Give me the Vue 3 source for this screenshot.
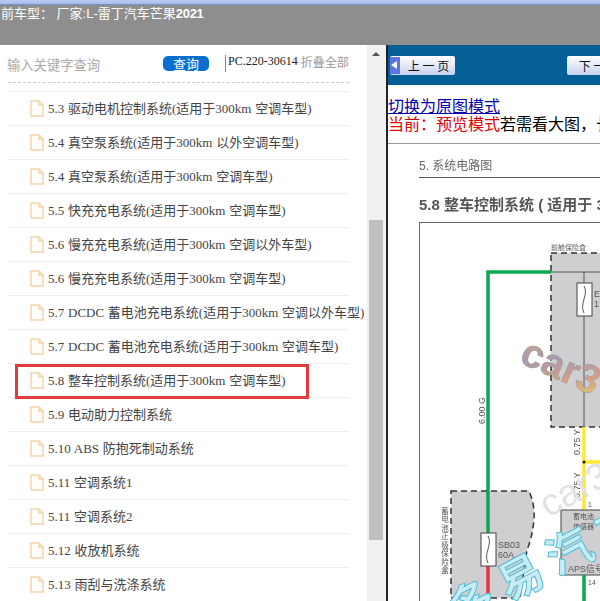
<script setup>
const chapters = [
  { id: 1, title: "5.3 驱动电机控制系统(适用于300km 空调车型)" },
  { id: 2, title: "5.4 真空泵系统(适用于300km 以外空调车型)" },
  { id: 3, title: "5.4 真空泵系统(适用于300km 空调车型)" },
  { id: 4, title: "5.5 快充充电系统(适用于300km 空调车型)" },
  { id: 5, title: "5.6 慢充充电系统(适用于300km 空调以外车型)" },
  { id: 6, title: "5.6 慢充充电系统(适用于300km 空调车型)" },
  { id: 7, title: "5.7 DCDC 蓄电池充电系统(适用于300km 空调以外车型)" },
  { id: 8, title: "5.7 DCDC 蓄电池充电系统(适用于300km 空调车型)" },
  { id: 9, title: "5.8 整车控制系统(适用于300km 空调车型)", marked: true },
  { id: 10, title: "5.9 电动助力控制系统" },
  { id: 11, title: "5.10 ABS 防抱死制动系统" },
  { id: 12, title: "5.11 空调系统1" },
  { id: 13, title: "5.11 空调系统2" },
  { id: 14, title: "5.12 收放机系统" },
  { id: 15, title: "5.13 雨刮与洗涤系统" },
];
</script>

<template>
  <div class="page">
    <div class="top-strip"></div>
    <header class="model-bar">前车型： 厂家:L-雷丁汽车芒果<b>2021</b></header>

    <main class="main">
      <section class="side">
        <div class="side__content">
          <div class="toolbar">
            <span class="toolbar__input">输入关键字查询</span>
            <button class="toolbar__btn">查询</button>
            <span class="toolbar__code">PC.220-30614</span>
            <span class="toolbar__fold">折叠全部</span>
          </div>
          <ul class="chapter-list">
            <li class="chapter-list__item" v-for="item in chapters" :key="item.id">
              <svg class="doc-icon" width="14" height="17" viewBox="0 0 14 17">
                <path d="M1 1h8l4 4v11H1z M9 1v4h4" fill="#fffdf9" stroke="#f2d2a9" stroke-width="1.4" />
              </svg>
              <span>{{ item.title }}</span>
              <span v-if="item.marked" class="chapter-list__mark"></span>
            </li>
          </ul>
        </div>
        <div class="scrollbar">
          <span class="scrollbar__arrow"></span>
          <span class="scrollbar__thumb"></span>
        </div>
      </section>

      <section class="viewer">
        <nav class="pager">
          <button class="pager__btn pager__btn--prev"><i class="pager__arrow"></i>上 一 页</button>
          <button class="pager__btn pager__btn--next">下 一 页</button>
        </nav>
        <div class="mode-lines">
          <a class="mode-lines__link" href="#">切换为原图模式</a>
          <div><span class="mode-lines__now">当前：预览模式</span>若需看大图，长按图片</div>
        </div>
        <div class="rule"></div>
        <svg class="diagram" width="212" height="456" viewBox="388 145 212 456">
          <defs>
            <linearGradient id="wm" x1="0" y1="0" x2="1" y2="1">
              <stop offset="0" stop-color="#e0b070" />
              <stop offset="0.4" stop-color="#a898b8" />
              <stop offset="0.7" stop-color="#d8a080" />
              <stop offset="1" stop-color="#dcd47a" />
            </linearGradient>
          </defs>

          <text x="419" y="170" class="t-sec">5. 系统电路图</text>
          <line x1="419" y1="177.5" x2="600" y2="177.5" stroke="#555" />
          <text x="419" y="210" class="t-head">5.8 整车控制系统 ( 适用于 300km</text>

          <rect x="419.5" y="222.5" width="200" height="400" fill="#fff" stroke="#666" />

          <text x="551" y="250" class="t-small">前舱保险盒</text>
          <rect x="551" y="253" width="70" height="174" fill="#cfcfd2" stroke="#333" stroke-width="1.5" stroke-dasharray="6 4" />
          <path d="M488 532V272H551" fill="none" stroke="#0aa850" stroke-width="3.5" />
          <path d="M551 272H600M584 272V427" fill="none" stroke="#555" />
          <rect x="577" y="283" width="15" height="33" fill="#fff" stroke="#444" />
          <path d="M584 286c5 8-5 18 0 27" fill="none" stroke="#555" />
          <text x="594" y="297" class="t-fuse">E</text>
          <text x="594" y="307" class="t-fuse">1</text>

          <text class="t-wire" transform="translate(485 424) rotate(-90)">6.00 G</text>
          <text class="t-wire" transform="translate(580 455) rotate(-90)">0.75 Y</text>
          <text class="t-wire" transform="translate(580 498) rotate(-90)">0.75 Y</text>

          <path d="M584 427V510M584 462H600" fill="none" stroke="#ffe92e" stroke-width="3.5" />
          <circle cx="584" cy="462" r="1.5" fill="#111" />
          <text x="588" y="507" class="t-small">1</text>

          <path d="M451 491H529Q535 505 534 518Q533 535 527 550L520 598H451Z" fill="#cfcfd2" stroke="#333" stroke-width="1.5" stroke-dasharray="6 4" />
          <path d="M488 491V533" stroke="#0aa850" stroke-width="3.5" />
          <path d="M488 566V601" stroke="#e8323c" stroke-width="3.5" />
          <rect x="481" y="533" width="15" height="33" fill="#fff" stroke="#444" />
          <path d="M488 536c5 8-5 18 0 27" fill="none" stroke="#555" />
          <text x="498" y="548" class="t-fuse">SB03</text>
          <text x="498" y="558" class="t-fuse">60A</text>
          <text x="444" y="507" class="t-vert">蓄电池正极保险盒</text>

          <rect x="561" y="510" width="70" height="65" fill="#cfcfd2" stroke="#444" />
          <text x="573" y="519" class="t-small">蓄电池</text>
          <text x="573" y="529" class="t-small">传感器</text>
          <text x="568" y="572" class="t-fuse">APS信号</text>
          <text x="588" y="585" class="t-small">14</text>
          <path d="M584 575V601" stroke="#0aa850" stroke-width="3.5" />

          <text class="wm-car" transform="translate(518 362) rotate(24)">car3</text>
          <text class="wm-gray" transform="translate(548 518) rotate(-28)">car3</text>
          <text class="wm-cn" transform="translate(460 628) rotate(-28)">多易汽车</text>
        </svg>
      </section>
    </main>
  </div>
</template>

<style scoped>
.page {
  width: 600px;
  height: 601px;
  overflow: hidden;
  display: flex;
  flex-direction: column;
  background: #fff;
}

.top-strip {
  height: 5px;
  background: linear-gradient(#b9cdf0, #a9bfe9 70%, #5a78c8);
}

.model-bar {
  height: 40px;
  padding: 1px 0 0 1px;
  box-sizing: border-box;
  background: #8e8e8e;
  color: #fff;
  font: 13px/16px "Liberation Sans", "Noto Sans CJK SC", sans-serif;
  white-space: pre;
}

.model-bar b {
  letter-spacing: -0.3px;
}

.main {
  flex: 1;
  display: flex;
  min-height: 0;
}

.side {
  width: 386px;
  display: flex;
  flex-shrink: 0;
  background: #fff;
}

.side__content {
  width: 367px;
  padding-left: 8px;
  box-sizing: border-box;
  overflow: hidden;
}

.toolbar {
  width: 341px;
  height: 38px;
  box-sizing: border-box;
  border-bottom: 1px dashed #ccc;
  display: flex;
  align-items: flex-start;
  white-space: nowrap;
}

.toolbar__input {
  width: 156px;
  margin-left: -1px;
  padding-top: 12px;
  color: #aaa;
  font: 13.3px/16px "Noto Sans CJK SC", sans-serif;
}

.toolbar__btn {
  width: 46px;
  height: 15px;
  margin-top: 11px;
  padding: 0;
  border: none;
  border-radius: 5px;
  background: #0a6fcf;
  color: #fff;
  font: 13px/15px "Noto Sans CJK SC", sans-serif;
}

.toolbar__code {
  margin: 10px 0 0 16px;
  padding-left: 2px;
  height: 17px;
  border-left: 1px solid #888;
  color: #222;
  font: 12px/13px "Liberation Serif", serif;
}

.toolbar__fold {
  margin: 10px 0 0 3px;
  color: #999;
  font: 12px/13px "Noto Sans CJK SC", sans-serif;
}

.chapter-list {
  list-style: none;
  margin: 8px 0 0;
  padding: 0;
  width: 341px;
  border-top: 1px solid #eee;
}

.chapter-list__item {
  position: relative;
  height: 34px;
  box-sizing: border-box;
  padding-left: 22px;
  border-bottom: 1px solid #eee;
  display: flex;
  align-items: center;
  gap: 4px;
  color: #444;
  font: 13px/16px "Liberation Serif", "Noto Sans CJK SC", serif;
  word-spacing: 0.5px;
  white-space: nowrap;
}

.doc-icon {
  flex-shrink: 0;
}

.chapter-list__mark {
  position: absolute;
  left: 7px;
  top: 0;
  width: 294px;
  height: 35px;
  box-sizing: border-box;
  border: 3px solid #e23b3b;
}

.scrollbar {
  position: relative;
  width: 19px;
  background: #f1f1f1;
}

.scrollbar__arrow {
  position: absolute;
  left: 5px;
  top: 7px;
  border: 4px solid transparent;
  border-top: none;
  border-bottom: 4px solid #555;
}

.scrollbar__thumb {
  position: absolute;
  left: 2px;
  top: 175px;
  width: 14px;
  height: 320px;
  background: #c0c0c0;
}

.viewer {
  flex: 1;
  min-width: 0;
  overflow: hidden;
  border-left: 2px solid #222;
  font: 16px/18px "Liberation Serif", "Noto Sans CJK SC", serif;
  color: #000;
}

.pager {
  height: 40px;
  padding: 11px 0 0 2px;
  box-sizing: border-box;
  display: flex;
  gap: 112px;
  background: #035f96;
  white-space: nowrap;
}

.pager__btn {
  position: relative;
  flex-shrink: 0;
  width: 65px;
  height: 19px;
  padding: 0 0 0 12px;
  border: none;
  border-radius: 2px;
  background: linear-gradient(#fff, #c6d2ee);
  color: #111;
  font: 12px/19px "Noto Sans CJK SC", sans-serif;
}

.pager__arrow {
  position: absolute;
  left: 0;
  top: 1px;
  width: 10px;
  height: 17px;
  background: #5a74e0;
}

.pager__arrow::after {
  content: "";
  position: absolute;
  left: 1px;
  top: 4px;
  border: 4px solid transparent;
  border-left: none;
  border-right: 6px solid #fff;
}

.pager__btn--next {
  padding-left: 0;
}

.mode-lines {
  padding-top: 13px;
  white-space: nowrap;
}

.mode-lines__link {
  color: #00a;
  display: block;
}

.mode-lines__now {
  color: #d00;
}

.rule {
  height: 1px;
  margin-top: 9px;
  background: #999;
}

.diagram {
  display: block;
  margin-top: 1px;
  filter: blur(0.35px);
  font-family: "Liberation Sans", "Noto Sans CJK SC", sans-serif;
}

.t-sec {
  font-size: 12px;
  fill: #666;
}

.t-head {
  font-size: 15px;
  font-weight: 700;
  fill: #555;
}

.t-small {
  font-size: 7px;
  fill: #555;
}

.t-wire {
  font-size: 9px;
  fill: #555;
}

.t-fuse {
  font-size: 9px;
  fill: #555;
}

.t-vert {
  font-size: 7.5px;
  fill: #555;
  writing-mode: vertical-rl;
  letter-spacing: 1px;
}

.wm-car {
  font-size: 40px;
  font-weight: 700;
  fill: url(#wm);
  stroke: #9a9a8a;
  stroke-width: 0.5px;
}

.wm-gray {
  font-size: 38px;
  fill: #e2e2e2;
}

.wm-cn {
  font-size: 45px;
  font-weight: 700;
  letter-spacing: 10px;
  fill: #c6ecf4;
  stroke: #55bcd4;
  stroke-width: 1px;
}
</style>

<style>
html,
body {
  background: #fff;
}
</style>
